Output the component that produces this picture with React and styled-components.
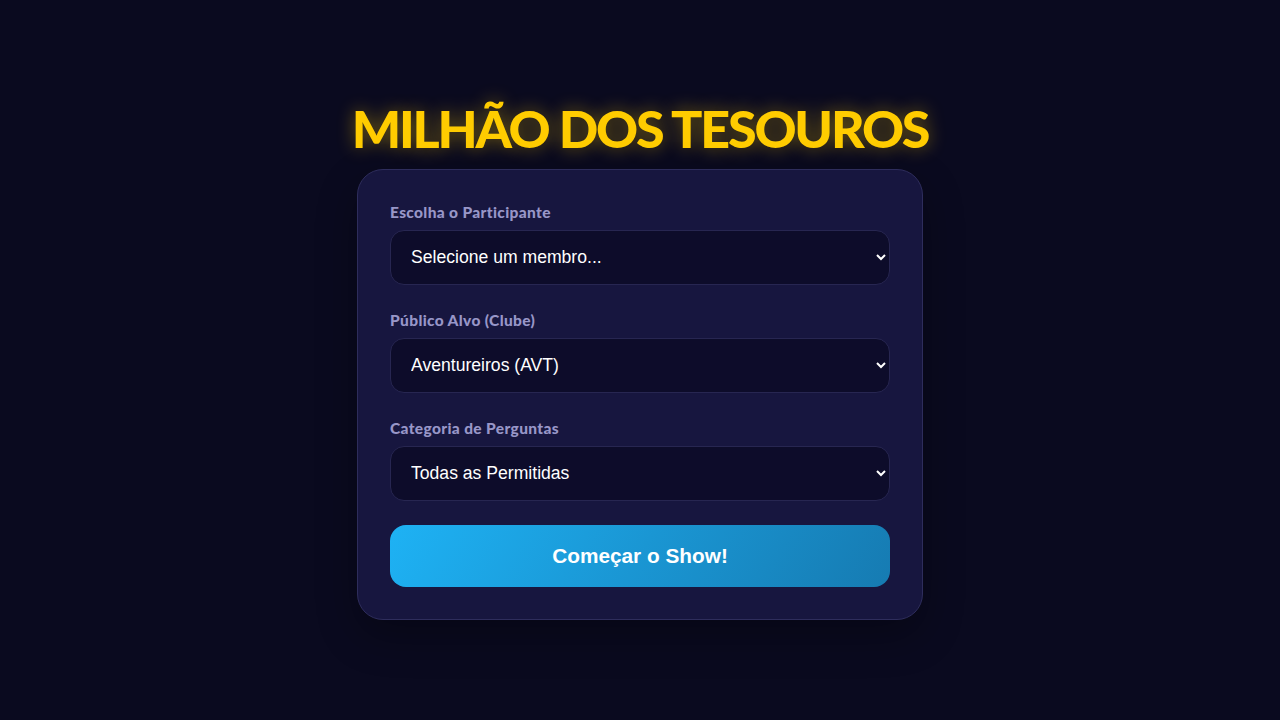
import styled, { createGlobalStyle } from 'styled-components';

const GlobalStyle = createGlobalStyle`
  * { box-sizing: border-box; }
  body {
    margin: 0;
    background: #0a0a1f;
    font-family: "Liberation Sans", Arial, sans-serif;
  }
`;

const Page = styled.main`
  min-height: 100vh;
  display: flex;
  flex-direction: column;
  align-items: center;
  justify-content: center;
  padding-bottom: 6px;
`;

const Title = styled.h1`
  margin: 0 0 8px;
  font-family: "Lato", sans-serif;
  font-weight: 900;
  font-size: 52px;
  line-height: 66px;
  letter-spacing: -2.2px;
  color: #ffcc00;
  text-shadow: 0 0 18px rgba(255, 204, 0, 0.45);
`;

const Card = styled.form`
  width: 566px;
  padding: 32px;
  background: #17163f;
  border: 1px solid #2e2d5c;
  border-radius: 26px;
  box-shadow: 0 16px 40px rgba(0, 0, 0, 0.3);
`;

const Field = styled.div`
  margin-bottom: 25px;

  &:last-of-type {
    margin-bottom: 24px;
  }
`;

const Label = styled.label`
  display: block;
  margin-bottom: 8px;
  font-family: "Lato", sans-serif;
  font-weight: 900;
  font-size: 15.5px;
  line-height: 20px;
  letter-spacing: 0.35px;
  color: #9896c8;
`;

const Select = styled.select`
  display: block;
  width: 100%;
  height: 55px;
  padding: 0 16px;
  background: #0d0c2a;
  border: 1px solid #272651;
  border-radius: 14px;
  color: #ffffff;
  font-family: "Liberation Sans", Arial, sans-serif;
  font-size: 17.6px;
  outline: none;
`;

const Button = styled.button`
  display: block;
  width: 100%;
  height: 62px;
  border: none;
  border-radius: 16px;
  background: linear-gradient(120deg, #1eb2f4 0%, #1a96d3 50%, #167bb2 100%);
  color: #ffffff;
  font-family: "Liberation Sans", Arial, sans-serif;
  font-weight: 700;
  font-size: 20.8px;
  cursor: pointer;
`;

const fields = [
  { label: 'Escolha o Participante', options: ['Selecione um membro...'] },
  { label: 'Público Alvo (Clube)', options: ['Aventureiros (AVT)', 'Desbravadores (DBV)'] },
  { label: 'Categoria de Perguntas', options: ['Todas as Permitidas'] },
];

export default function App() {
  return (
    <>
      <GlobalStyle />
      <Page>
        <Title>MILHÃO DOS TESOUROS</Title>
        <Card onSubmit={(e) => e.preventDefault()}>
          {fields.map((f) => (
            <Field key={f.label}>
              <Label>{f.label}</Label>
              <Select>
                {f.options.map((o) => (
                  <option key={o}>{o}</option>
                ))}
              </Select>
            </Field>
          ))}
          <Button type="submit">Começar o Show!</Button>
        </Card>
      </Page>
    </>
  );
}
